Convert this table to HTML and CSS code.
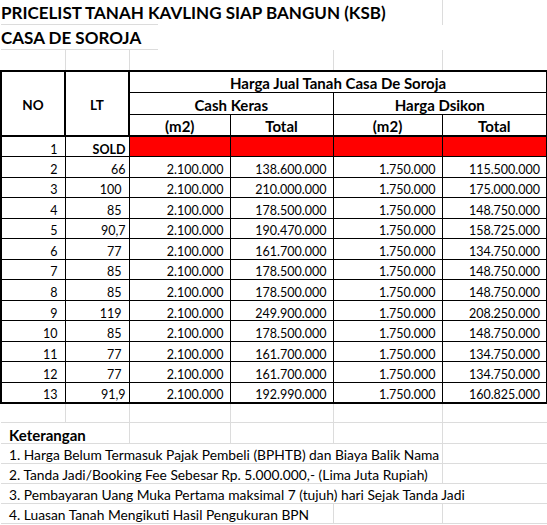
FILE: index.html
```html
<!DOCTYPE html>
<html lang="id">
<head>
<meta charset="utf-8">
<title>Pricelist Casa De Soroja</title>
<link rel="stylesheet" href="styles.css">
</head>
<body>
<table class="sheet">
  <colgroup>
    <col class="ca"><col class="cb"><col class="cc"><col class="cd"><col class="ce"><col class="cf">
  </colgroup>
  <tr class="r1">
    <td colspan="5" class="title t1">PRICELIST TANAH KAVLING SIAP BANGUN (KSB)</td>
    <td class="blank"></td>
  </tr>
  <tr class="r2">
    <td colspan="6" class="title t2">CASA DE SOROJA</td>
  </tr>
  <tr class="r3">
    <td class="g"></td><td class="g"></td><td colspan="2" class="g"></td><td class="g"></td><td></td>
  </tr>
  <tr class="tb h1">
    <td rowspan="3" class="hd key">NO</td>
    <td rowspan="3" class="hd key">LT</td>
    <td colspan="4" class="hd">Harga Jual Tanah Casa De Soroja</td>
  </tr>
  <tr class="tb h2">
    <td colspan="2" class="hd">Cash Keras</td>
    <td colspan="2" class="hd">Harga Dsikon</td>
  </tr>
  <tr class="tb h3">
    <td class="hd">(m2)</td><td class="hd">Total</td><td class="hd">(m2)</td><td class="hd">Total</td>
  </tr>
  <tr class="tb d first">
    <td class="a">1</td><td class="b txt">SOLD</td><td class="sold"></td><td class="sold"></td><td class="sold"></td><td class="sold"></td>
  </tr>
  <tr class="tb d"><td class="a">2</td><td class="b txt">66</td><td>2.100.000</td><td>138.600.000</td><td>1.750.000</td><td>115.500.000</td></tr>
  <tr class="tb d"><td class="a">3</td><td class="b">100</td><td>2.100.000</td><td>210.000.000</td><td>1.750.000</td><td>175.000.000</td></tr>
  <tr class="tb d"><td class="a">4</td><td class="b">85</td><td>2.100.000</td><td>178.500.000</td><td>1.750.000</td><td>148.750.000</td></tr>
  <tr class="tb d"><td class="a">5</td><td class="b txt">90,7</td><td>2.100.000</td><td>190.470.000</td><td>1.750.000</td><td>158.725.000</td></tr>
  <tr class="tb d"><td class="a">6</td><td class="b">77</td><td>2.100.000</td><td>161.700.000</td><td>1.750.000</td><td>134.750.000</td></tr>
  <tr class="tb d"><td class="a">7</td><td class="b">85</td><td>2.100.000</td><td>178.500.000</td><td>1.750.000</td><td>148.750.000</td></tr>
  <tr class="tb d"><td class="a">8</td><td class="b">85</td><td>2.100.000</td><td>178.500.000</td><td>1.750.000</td><td>148.750.000</td></tr>
  <tr class="tb d"><td class="a">9</td><td class="b">119</td><td>2.100.000</td><td>249.900.000</td><td>1.750.000</td><td>208.250.000</td></tr>
  <tr class="tb d"><td class="a">10</td><td class="b">85</td><td>2.100.000</td><td>178.500.000</td><td>1.750.000</td><td>148.750.000</td></tr>
  <tr class="tb d"><td class="a">11</td><td class="b">77</td><td>2.100.000</td><td>161.700.000</td><td>1.750.000</td><td>134.750.000</td></tr>
  <tr class="tb d"><td class="a">12</td><td class="b">77</td><td>2.100.000</td><td>161.700.000</td><td>1.750.000</td><td>134.750.000</td></tr>
  <tr class="tb d last"><td class="a">13</td><td class="b txt">91,9</td><td>2.100.000</td><td>192.990.000</td><td>1.750.000</td><td>160.825.000</td></tr>
  <tr class="gap">
    <td class="g"></td><td class="g"></td><td class="g"></td><td class="g"></td><td class="g"></td><td></td>
  </tr>
  <tr class="note head">
    <td colspan="2" class="g ket">Keterangan</td><td class="g"></td><td class="g"></td><td class="g"></td><td></td>
  </tr>
  <tr class="note">
    <td colspan="5" class="g">1. Harga Belum Termasuk Pajak Pembeli (BPHTB) dan Biaya Balik Nama</td><td></td>
  </tr>
  <tr class="note">
    <td colspan="5" class="g">2. Tanda Jadi/Booking Fee Sebesar Rp. 5.000.000,- (Lima Juta Rupiah)</td><td></td>
  </tr>
  <tr class="note">
    <td colspan="6">3. Pembayaran Uang Muka Pertama maksimal 7 (tujuh) hari Sejak Tanda Jadi</td>
  </tr>
  <tr class="note">
    <td colspan="4" class="g">4. Luasan Tanah Mengikuti Hasil Pengukuran BPN</td><td class="g"></td><td></td>
  </tr>
</table>
</body>
</html>
```

FILE: styles.css
```css
html, body {
  margin: 0;
  padding: 0;
  background: #ffffff;
}

body {
  font-family: Lato, "Liberation Sans", sans-serif;
  color: #000000;
}

.sheet {
  border-collapse: collapse;
  table-layout: fixed;
  width: 546px;
}

.ca { width: 64px; }
.cb { width: 64px; }
.cc { width: 101px; }
.cd { width: 103px; }
.ce { width: 109px; }
.cf { width: 105px; }

.sheet td {
  box-sizing: border-box;
  padding: 0;
  white-space: nowrap;
  overflow: visible;
  line-height: 14px;
}

/* title rows */
.r1 td, .r2 td { height: 25px; }
.title {
  font-size: 17px;
  font-weight: 700;
  line-height: 18px;
  padding-left: 10px;
  vertical-align: middle;
  background: linear-gradient(#dcdcdc, #dcdcdc) no-repeat left bottom / 157px 1px;
}
.t1 {
  border-right: 1px solid #dcdcdc;
  padding-top: 3px;
}
.t2 { padding-top: 3px; }
.r3 td { height: 21px; }

.g { border-right: 1px solid #dcdcdc; }

/* bordered table */
.tb td {
  border: 1px solid #000000;
}
.h1 td { border-top: 2px solid #000000; height: 21px; }
.h2 td { height: 22px; }
.h3 td { height: 22px; border-bottom: 2px solid #000000; }
.h1 td:first-child { border-left: 2px solid #000000; }
.tb td:last-child { border-right: 2px solid #000000; }
.key {
  border-right-width: 2px !important;
  border-bottom: 2px solid #000000 !important;
  font-size: 13.5px !important;
  padding-top: 5px !important;
}

.hd {
  font-size: 15px;
  font-weight: 700;
  line-height: 15px;
  text-align: center;
  vertical-align: middle;
  padding-top: 3px !important;
}

.d td {
  height: 20.54px;
  font-size: 12.5px;
  line-height: 13px;
  text-align: right;
  vertical-align: middle;
  padding: 5px 6px 0 0;
}
.d td:first-child { border-left: 2px solid #000000; }
.d td.a { padding-right: 7px; }
.d td.b { padding-right: 7px; }
.d td.b.txt { padding-right: 3px; }
.d td.sold { background: #ff0000; }
.d.first td.b { font-weight: 700; }
.last td { border-bottom: 2px solid #000000; }

/* notes */
.gap td { height: 20px; border-bottom: 1px solid #dcdcdc; }
.note td {
  height: 20px;
  font-size: 13.8px;
  line-height: 14px;
  padding-left: 8px;
  padding-top: 3px;
  vertical-align: middle;
  border-bottom: 1px solid #dcdcdc;
}
.note.head td { height: 21px; }
.note td.ket { font-weight: 700; font-size: 15px; }
```
